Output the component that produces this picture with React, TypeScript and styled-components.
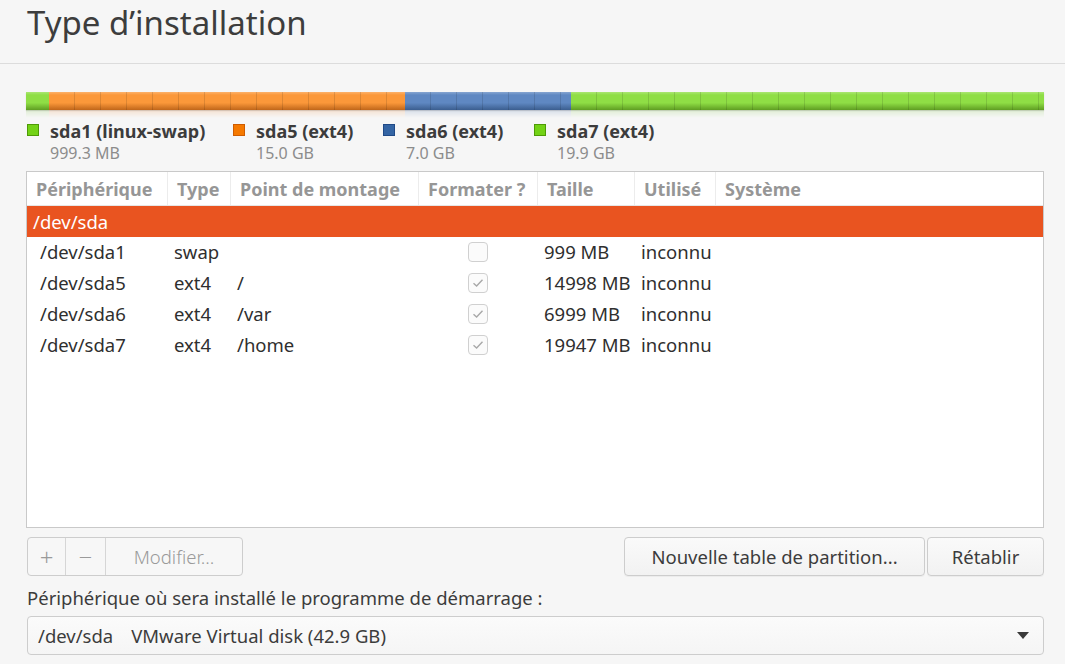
import React, { FunctionComponent } from "react"
import styled, { createGlobalStyle } from "styled-components"

const GlobalStyle = createGlobalStyle`
  html, body {
    margin: 0;
    padding: 0;
    background: #f6f6f6;
  }
  body {
    font-family: "Noto Sans", "DejaVu Sans", sans-serif;
    color: #3c3c3c;
  }
`

const Page = styled.div`
  width: 1065px;
  height: 664px;
  overflow: hidden;
  display: flex;
  flex-direction: column;
`

const Header = styled.header`
  height: 64px;
  border-bottom: 1px solid #dcdcdc;
  padding-left: 27px;
  box-sizing: border-box;
`

const Title = styled.h1`
  margin: 0;
  font-size: 33px;
  line-height: 45px;
  font-weight: 400;
  color: #3d3d3d;
`

const Body = styled.div`
  padding: 28px 21px 0 26px;
  display: flex;
  flex-direction: column;
`

const Bar = styled.div`
  display: flex;
  height: 18px;
  box-shadow: 0 1px 1px rgba(0, 0, 0, 0.15);
`

const Segment = styled.div<{ $top: string; $bottom: string }>`
  background:
    repeating-linear-gradient(
      to right,
      transparent 0,
      transparent 25px,
      rgba(0, 0, 0, 0.12) 25px,
      rgba(0, 0, 0, 0.12) 26px
    ),
    linear-gradient(
      to bottom,
      rgba(255, 255, 255, 0.25) 0,
      rgba(255, 255, 255, 0) 3px
    ),
    linear-gradient(to bottom, ${(p) => p.$top} 0%, ${(p) => p.$top} 60%, ${(p) => p.$bottom} 100%);
`

const Reflection = styled.div`
  display: flex;
  height: 8px;
  opacity: 0.18;
  -webkit-mask-image: linear-gradient(to bottom, #000, transparent);
  mask-image: linear-gradient(to bottom, #000, transparent);
`

const ReflectionPart = styled.div<{ $color: string }>`
  background: ${(p) => p.$color};
`

const Legend = styled.div`
  display: flex;
  margin-top: 1px;
  padding-left: 1px;
`

const LegendItem = styled.div<{ $width: number }>`
  width: ${(p) => p.$width}px;
  display: grid;
  grid-template-columns: 12px auto;
  column-gap: 11px;
`

const Swatch = styled.span<{ $color: string; $border: string }>`
  width: 12px;
  height: 12px;
  margin-top: 5px;
  box-sizing: border-box;
  background: ${(p) => p.$color};
  border: 1px solid ${(p) => p.$border};
`

const LegendName = styled.span`
  font-size: 18px;
  font-weight: 700;
  color: #3c3c3c;
  line-height: 24px;
  white-space: nowrap;
`

const LegendSize = styled.span`
  grid-column: 2;
  font-size: 16px;
  color: #8c8c8c;
  line-height: 20px;
`

const Table = styled.div`
  margin-top: 8px;
  height: 357px;
  background: #ffffff;
  border: 1px solid #c9c9c9;
  box-sizing: border-box;
`

const COLS = "141px 63px 188px 119px 97px 81px 1fr"

const HeadRow = styled.div`
  display: grid;
  grid-template-columns: ${COLS};
  height: 34px;
  box-sizing: border-box;
  border-bottom: 1px solid #e6e6e6;
`

const HeadCell = styled.div`
  display: flex;
  align-items: center;
  padding-left: 9px;
  font-size: 18px;
  font-weight: 700;
  color: #969696;
  white-space: nowrap;
  overflow: hidden;
  border-right: 1px solid #ececec;

  &:last-child {
    border-right: none;
  }
`

const DiskRow = styled.div`
  height: 31px;
  background: #e95420;
  color: #ffffff;
  font-size: 18.5px;
  display: flex;
  align-items: center;
  padding-left: 6px;
`

const Row = styled.div`
  display: grid;
  grid-template-columns: ${COLS};
  height: 31px;
  font-size: 18.5px;
  color: #2f2f2f;
`

const Cell = styled.div<{ $pad?: number; $center?: boolean }>`
  display: flex;
  align-items: center;
  justify-content: ${(p) => (p.$center ? "center" : "flex-start")};
  padding-left: ${(p) => (p.$pad !== undefined ? p.$pad : 6)}px;
  padding-bottom: 2px;
  white-space: nowrap;
`

const Check = styled.span`
  width: 20px;
  height: 20px;
  margin-right: 2px;
  box-sizing: border-box;
  border: 1px solid #d0d0d0;
  border-radius: 4px;
  background: #fbfbfb;
  display: flex;
  align-items: center;
  justify-content: center;
`

const Toolbar = styled.div`
  display: flex;
  margin-top: 9px;
  padding-left: 1px;
  height: 39px;
`

const ButtonGroup = styled.div`
  display: flex;
  border: 1px solid #cdcdcd;
  border-radius: 4px;
  background: #f7f7f7;
  box-sizing: border-box;
`

const GroupButton = styled.div<{ $width: number; $size?: number }>`
  width: ${(p) => p.$width}px;
  display: flex;
  align-items: center;
  justify-content: center;
  color: #9a9a9a;
  font-size: ${(p) => p.$size || 18.5}px;
  font-weight: 300;
  border-right: 1px solid #d6d6d6;

  &:last-child {
    border-right: none;
  }
`

const Button = styled.div<{ $width: number }>`
  width: ${(p) => p.$width}px;
  box-sizing: border-box;
  display: flex;
  align-items: center;
  justify-content: center;
  border: 1px solid #cdcdcd;
  border-radius: 4px;
  background: linear-gradient(#fafafa, #f2f2f2);
  font-size: 18.5px;
  color: #3c3c3c;
  white-space: nowrap;
  box-shadow: 0 1px 0 rgba(0, 0, 0, 0.04);
`

const Spacer = styled.div`
  flex: 1;
`

const Label = styled.div`
  margin-top: 11px;
  padding-left: 1px;
  font-size: 18.5px;
  color: #3c3c3c;
  line-height: 22px;
  white-space: nowrap;
`

const Select = styled.div`
  margin-top: 7px;
  margin-left: 1px;
  height: 39px;
  box-sizing: border-box;
  border: 1px solid #cdcdcd;
  border-radius: 4px;
  background: linear-gradient(#fbfbfb, #f5f5f5);
  display: flex;
  align-items: center;
  gap: 18px;
  padding: 0 14px 0 10px;
  font-size: 18.5px;
  color: #3c3c3c;
`

const SelectDetail = styled.span`
  flex: 1;
  white-space: nowrap;
`

const segments = [
  { width: 23, top: "#8fde45", bottom: "#5f9e22", flat: "#7dc93a" },
  { width: 356, top: "#fb983a", bottom: "#c0661a", flat: "#f28a30" },
  { width: 166, top: "#5f88c2", bottom: "#3b5e8f", flat: "#5479b0" },
  { width: 473, top: "#8fde45", bottom: "#5f9e22", flat: "#7dc93a" },
]

const legend = [
  { name: "sda1 (linux-swap)", size: "999.3 MB", color: "#73d216", border: "#4e9a06", width: 206 },
  { name: "sda5 (ext4)", size: "15.0 GB", color: "#f57900", border: "#ce5c00", width: 150 },
  { name: "sda6 (ext4)", size: "7.0 GB", color: "#3465a4", border: "#204a87", width: 151 },
  { name: "sda7 (ext4)", size: "19.9 GB", color: "#73d216", border: "#4e9a06", width: 150 },
]

const columns = ["Périphérique", "Type", "Point de montage", "Formater ?", "Taille", "Utilisé", "Système"]

const partitions = [
  { dev: "/dev/sda1", type: "swap", mount: "", format: false, size: "999 MB", used: "inconnu" },
  { dev: "/dev/sda5", type: "ext4", mount: "/", format: true, size: "14998 MB", used: "inconnu" },
  { dev: "/dev/sda6", type: "ext4", mount: "/var", format: true, size: "6999 MB", used: "inconnu" },
  { dev: "/dev/sda7", type: "ext4", mount: "/home", format: true, size: "19947 MB", used: "inconnu" },
]

const Tick: FunctionComponent = () => (
  <svg width="12" height="10" viewBox="0 0 12 10">
    <path d="M1.5 5.2 L4.6 8 L10.5 1.8" fill="none" stroke="#a8a8a8" strokeWidth="1.4" />
  </svg>
)

const Arrow: FunctionComponent = () => (
  <svg width="12" height="7" viewBox="0 0 12 7">
    <path d="M0 0 H12 L6 7 Z" fill="#3a3a3a" />
  </svg>
)

const App: FunctionComponent = () => (
  <Page>
    <GlobalStyle />
    <Header>
      <Title>Type d’installation</Title>
    </Header>
    <Body>
      <Bar>
        {segments.map((s, i) => (
          <Segment key={i} $top={s.top} $bottom={s.bottom} style={{ width: s.width }} />
        ))}
      </Bar>
      <Reflection>
        {segments.map((s, i) => (
          <ReflectionPart key={i} $color={s.flat} style={{ width: s.width }} />
        ))}
      </Reflection>
      <Legend>
        {legend.map((l) => (
          <LegendItem key={l.name} $width={l.width}>
            <Swatch $color={l.color} $border={l.border} />
            <LegendName>{l.name}</LegendName>
            <LegendSize>{l.size}</LegendSize>
          </LegendItem>
        ))}
      </Legend>
      <Table>
        <HeadRow>
          {columns.map((c) => (
            <HeadCell key={c}>{c}</HeadCell>
          ))}
        </HeadRow>
        <DiskRow>/dev/sda</DiskRow>
        {partitions.map((p) => (
          <Row key={p.dev}>
            <Cell $pad={13}>{p.dev}</Cell>
            <Cell>{p.type}</Cell>
            <Cell>{p.mount}</Cell>
            <Cell $pad={0} $center>
              <Check>{p.format && <Tick />}</Check>
            </Cell>
            <Cell>{p.size}</Cell>
            <Cell>{p.used}</Cell>
            <Cell />
          </Row>
        ))}
      </Table>
      <Toolbar>
        <ButtonGroup>
          <GroupButton $width={37} $size={24}>+</GroupButton>
          <GroupButton $width={39} $size={24}>−</GroupButton>
          <GroupButton $width={136}>Modifier...</GroupButton>
        </ButtonGroup>
        <Spacer />
        <Button $width={301}>Nouvelle table de partition...</Button>
        <Button $width={117} style={{ marginLeft: 2 }}>Rétablir</Button>
      </Toolbar>
      <Label>Périphérique où sera installé le programme de démarrage :</Label>
      <Select>
        <span>/dev/sda</span>
        <SelectDetail>VMware Virtual disk (42.9 GB)</SelectDetail>
        <Arrow />
      </Select>
    </Body>
  </Page>
)

export default App
